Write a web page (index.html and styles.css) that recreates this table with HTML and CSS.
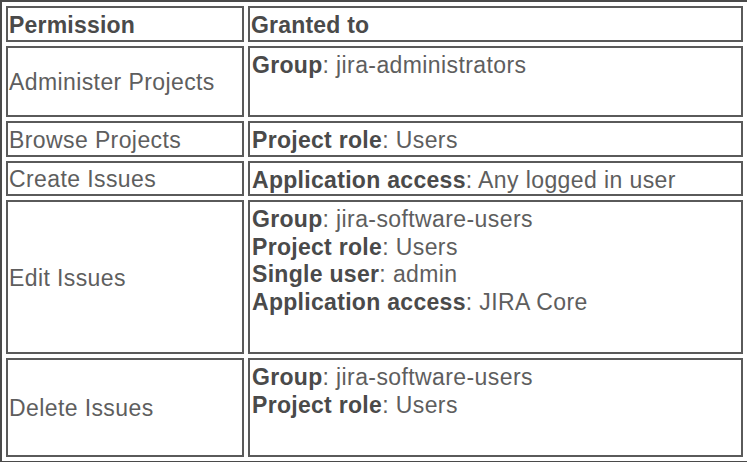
FILE: index.html
```html
<!DOCTYPE html>
<html>
<head>
<meta charset="utf-8">
<link rel="stylesheet" href="styles.css">
</head>
<body>
<table class="perms">
  <tr class="r-head">
    <th class="c-perm">Permission</th>
    <th class="c-grant">Granted to</th>
  </tr>
  <tr class="r-admin">
    <td class="c-perm">Administer Projects</td>
    <td class="c-grant"><b>Group</b>: jira-administrators</td>
  </tr>
  <tr class="r-short">
    <td class="c-perm">Browse Projects</td>
    <td class="c-grant"><b>Project role</b>: Users</td>
  </tr>
  <tr class="r-short">
    <td class="c-perm">Create Issues</td>
    <td class="c-grant"><b>Application access</b>: Any logged in user</td>
  </tr>
  <tr class="r-edit">
    <td class="c-perm">Edit Issues</td>
    <td class="c-grant"><b>Group</b>: jira-software-users<br><b>Project role</b>: Users<br><b>Single user</b>: admin<br><b>Application access</b>: JIRA Core</td>
  </tr>
  <tr class="r-delete">
    <td class="c-perm">Delete Issues</td>
    <td class="c-grant"><b>Group</b>: jira-software-users<br><b>Project role</b>: Users</td>
  </tr>
</table>
</body>
</html>
```
FILE: styles.css
```css
html, body {
  margin: 0;
  padding: 0;
  background: #ffffff;
  overflow: hidden;
}

.perms {
  width: 747px;
  table-layout: fixed;
  border-collapse: separate;
  border-spacing: 4px;
  border-top: 2px solid #4a4a4a;
  border-left: 2px solid #4a4a4a;
  border-bottom: 2px solid #4a4a4a;
  border-right: none;
  font-family: "Liberation Sans", Arial, sans-serif;
  font-size: 23px;
  letter-spacing: 0.4px;
  color: #5e5e5e;
  background: #ffffff;
}

.perms th,
.perms td {
  box-sizing: border-box;
  border: 2px solid #5a5a5a;
  padding: 3px 1px 0 1px;
  text-align: left;
  vertical-align: middle;
  line-height: 27.5px;
}

.perms th {
  font-weight: bold;
  color: #4a4a4a;
  padding-top: 4px;
  letter-spacing: 0.2px;
}

.perms b {
  color: #4a4a4a;
  letter-spacing: 0.3px;
}

.c-perm {
  width: 238px;
}

.perms td.c-grant {
  vertical-align: top;
  padding: 4px 2px 0 2px;
}

.r-head { height: 36px; }
.r-admin { height: 71px; }
.r-short { height: 35px; }
.r-edit { height: 154px; }
.r-delete { height: 99px; }
```
